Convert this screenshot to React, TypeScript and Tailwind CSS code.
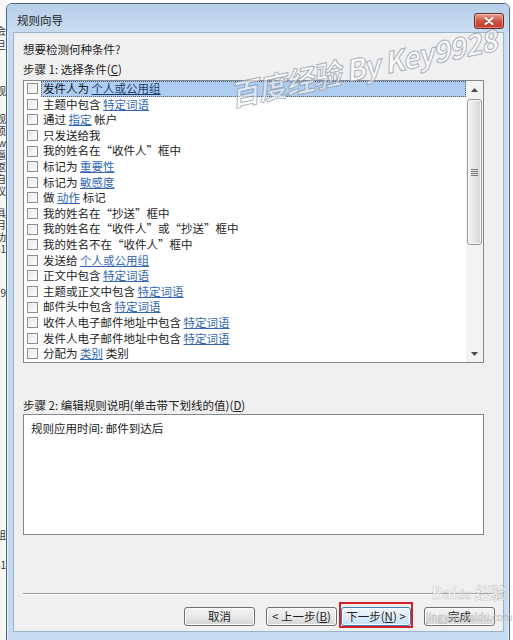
type Cond = { pre: string; link?: string; post?: string };

const conditions: Cond[] = [
  { pre: "发件人为", link: "个人或公用组" },
  { pre: "主题中包含", link: "特定词语" },
  { pre: "通过", link: "指定", post: "帐户" },
  { pre: "只发送给我" },
  { pre: "我的姓名在\u201c收件人\u201d框中" },
  { pre: "标记为", link: "重要性" },
  { pre: "标记为", link: "敏感度" },
  { pre: "做", link: "动作", post: "标记" },
  { pre: "我的姓名在\u201c抄送\u201d框中" },
  { pre: "我的姓名在\u201c收件人\u201d或\u201c抄送\u201d框中" },
  { pre: "我的姓名不在\u201c收件人\u201d框中" },
  { pre: "发送给", link: "个人或公用组" },
  { pre: "正文中包含", link: "特定词语" },
  { pre: "主题或正文中包含", link: "特定词语" },
  { pre: "邮件头中包含", link: "特定词语" },
  { pre: "收件人电子邮件地址中包含", link: "特定词语" },
  { pre: "发件人电子邮件地址中包含", link: "特定词语" },
  { pre: "分配为", link: "类别", post: "类别" },
];

// bits of the window underneath, cut off by the dialog
const behind: [number, string][] = [
  [24, ""], [12, "会"], [14, "旦"], [34, ""], [12, "观"], [28, "观"], [12, "须"],
  [12, "w"], [12, "逼"], [12, "返"], [12, "自"], [12, "议"], [22, "具"], [12, "月"],
  [12, "功"], [12, "51"], [44, "9"], [222, ""], [20, "组"], [30, "51"],
];

function BackStrip() {
  return (
    <div className="flex w-[6px] shrink-0 flex-col bg-[#f7f7f7] text-[10px] leading-[10px] text-[#333]">
      {behind.map(([h, t], i) => (
        <div key={i} style={{ height: h }} className="flex items-end justify-end overflow-hidden whitespace-nowrap">
          {t}
        </div>
      ))}
    </div>
  );
}

function CloseButton() {
  return (
    <div className="mt-[9px] flex h-[16px] w-[30px] items-center justify-center rounded-[3px] border border-[#6e2b22] bg-gradient-to-b from-[#e8a194] via-[#cc5441] to-[#c13a28] shadow-[inset_0_0_0_1px_rgba(255,255,255,0.35)]">
      <svg width="10" height="8" viewBox="0 0 10 8">
        <path d="M1.5 1 L8.5 7 M8.5 1 L1.5 7" stroke="#5a1a12" strokeWidth="3" strokeLinecap="round" opacity="0.5" />
        <path d="M1.5 1 L8.5 7 M8.5 1 L1.5 7" stroke="#fff" strokeWidth="2.2" strokeLinecap="round" />
      </svg>
    </div>
  );
}

function Checkbox() {
  return <span className="ml-[3px] h-[11px] w-[11px] shrink-0 border border-[#8f8f8f] bg-gradient-to-br from-[#e6e6e6] to-[#ffffff] shadow-[inset_0_0_0_1px_#f4f4f4]" />;
}

function ConditionRow({ c, selected }: { c: Cond; selected: boolean }) {
  return (
    <div className="flex h-[15.6px] items-center">
      <Checkbox />
      <div
        className={
          selected
            ? "ml-[3px] flex h-full flex-1 items-center border border-dotted border-[#4a5a70] bg-[#aecdf1] pl-[1px] text-[#101820]"
            : "ml-[3px] flex h-full flex-1 items-center pl-[2px]"
        }
      >
        <span className="whitespace-nowrap">
          {c.pre}
          {c.link && (
            <>
              {" "}
              <span className={selected ? "text-[#1b3a70] underline" : "text-[#3468b4] underline"}>{c.link}</span>
            </>
          )}
          {c.post && <> {c.post}</>}
        </span>
      </div>
    </div>
  );
}

function Scrollbar() {
  return (
    <div className="flex w-[17px] shrink-0 flex-col bg-[#f3f3f3]">
      <div className="flex h-[17px] items-center justify-center">
        <svg width="7" height="4" viewBox="0 0 7 4"><path d="M3.5 0 L7 4 L0 4 Z" fill="#4a4a4a" /></svg>
      </div>
      <div className="mx-[1px] mt-[1px] flex h-[146px] items-center justify-center rounded-[3px] border border-[#9c9c9c] bg-gradient-to-r from-[#f2f2f2] via-[#e6e6e6] to-[#d3d3d3] shadow-[inset_0_0_0_1px_#fafafa]">
        <div className="flex flex-col gap-[1px]">
          <span className="h-[1px] w-[7px] bg-[#7a7a7a]" />
          <span className="h-[1px] w-[7px] bg-[#7a7a7a]" />
          <span className="h-[1px] w-[7px] bg-[#7a7a7a]" />
          <span className="h-[1px] w-[7px] bg-[#7a7a7a]" />
        </div>
      </div>
      <div className="flex-1" />
      <div className="flex h-[17px] items-center justify-center">
        <svg width="7" height="4" viewBox="0 0 7 4"><path d="M0 0 L7 0 L3.5 4 Z" fill="#4a4a4a" /></svg>
      </div>
    </div>
  );
}

function WinButton({ children, primary }: { children: React.ReactNode; primary?: boolean }) {
  return (
    <button
      className={
        primary
          ? "flex h-[19px] w-[70px] items-center justify-center rounded-[3px] border border-[#3c7fb1] bg-gradient-to-b from-[#f1f8fd] via-[#dcecfa] to-[#c4e0f7] leading-none text-[#1e1e1e] shadow-[inset_0_0_0_1px_#fdfdfd]"
          : "flex h-[19px] w-[71px] items-center justify-center rounded-[3px] border border-[#707070] bg-gradient-to-b from-[#f4f4f4] via-[#e9e9e9] to-[#d5d5d5] leading-none text-[#1e1e1e] shadow-[inset_0_0_0_1px_#fcfcfc]"
      }
    >
      {children}
    </button>
  );
}

export default function App() {
  return (
    <div className="relative flex h-[640px] w-[513px] overflow-hidden bg-white font-['Noto_Sans_CJK_SC','Liberation_Sans',sans-serif] text-[11.5px] text-[#222]">
      <BackStrip />

      <div className="mt-[3px] flex h-[645px] w-[504px] shrink-0 flex-col rounded-t-[6px] border border-[#52647c] bg-[#c8dcf1] shadow-[inset_0_0_0_1px_rgba(255,255,255,0.5)]">
        <div className="flex h-[28px] items-start justify-between rounded-t-[5px] bg-gradient-to-b from-[#b7cfea] to-[#c9dcf1] pl-[10px] pr-[5px]">
          <span className="mt-[8px] text-[11.5px] leading-[16px] text-[#1a1a1a]">规则向导</span>
          <CloseButton />
        </div>

        <div className="ml-[6px] mr-[5px] flex h-[600px] flex-col border border-[#9db2cb] bg-[#f0f0f0] pl-[9px]">
          <p className="mt-[8px] h-[16px] leading-[16px]">想要检测何种条件?</p>
          <p className="mt-[4px] h-[16px] leading-[16px]">
            步骤 1: 选择条件(<span className="underline">C</span>)
          </p>

          <div className="mt-[3px] flex h-[283px] w-[461px] border border-[#828790] bg-white leading-none">
            <div className="flex flex-1 flex-col">
              {conditions.map((c, i) => (
                <ConditionRow key={i} c={c} selected={i === 0} />
              ))}
            </div>
            <Scrollbar />
          </div>

          <p className="mt-[34px] h-[16px] leading-[16px]">
            步骤 2: 编辑规则说明(单击带下划线的值)(<span className="underline">D</span>)
          </p>
          <div className="mt-[1px] h-[121px] w-[461px] border border-[#828790] bg-white pl-[7px] pt-[5px] leading-[16px]">
            规则应用时间: 邮件到达后
          </div>

          <div className="mt-[58px] w-[472px] border-t border-b border-t-[#a0a0a0] border-b-white" />

          <div className="mt-[12px] flex w-[472px] justify-end">
            <WinButton>取消</WinButton>
            <div className="ml-[11px]">
              <WinButton>
                &lt; 上一步(<span className="underline">B</span>)
              </WinButton>
            </div>
            <div className="relative ml-[4px]">
              <WinButton primary>
                下一步(<span className="underline">N</span>) &gt;
              </WinButton>
              <span className="absolute -bottom-[2px] -left-[2px] -right-[2px] -top-[5px] border-2 border-[#d3212c]" />
            </div>
            <div className="ml-[13px]">
              <WinButton>完成</WinButton>
            </div>
          </div>
        </div>
      </div>

      {/* watermarks over the screenshot */}
      <div className="pointer-events-none absolute left-[230px] top-[80px] origin-left -rotate-[12deg] whitespace-nowrap text-[29px] font-bold italic leading-none tracking-[-1px] text-white/55 [-webkit-text-stroke:1px_rgba(130,140,155,0.65)]">
        百度经验 By Key9928
      </div>
      <div className="pointer-events-none absolute left-[426px] top-[584px] flex flex-col items-center whitespace-nowrap leading-none text-white/60 [-webkit-text-stroke:0.6px_rgba(150,150,150,0.5)]">
        <span className="text-[16px] font-bold">Bai<span className="text-[11px]">du</span> 经验</span>
        <span className="mt-[12px] text-[10px]">jingyan.baidu.com</span>
      </div>
    </div>
  );
}
